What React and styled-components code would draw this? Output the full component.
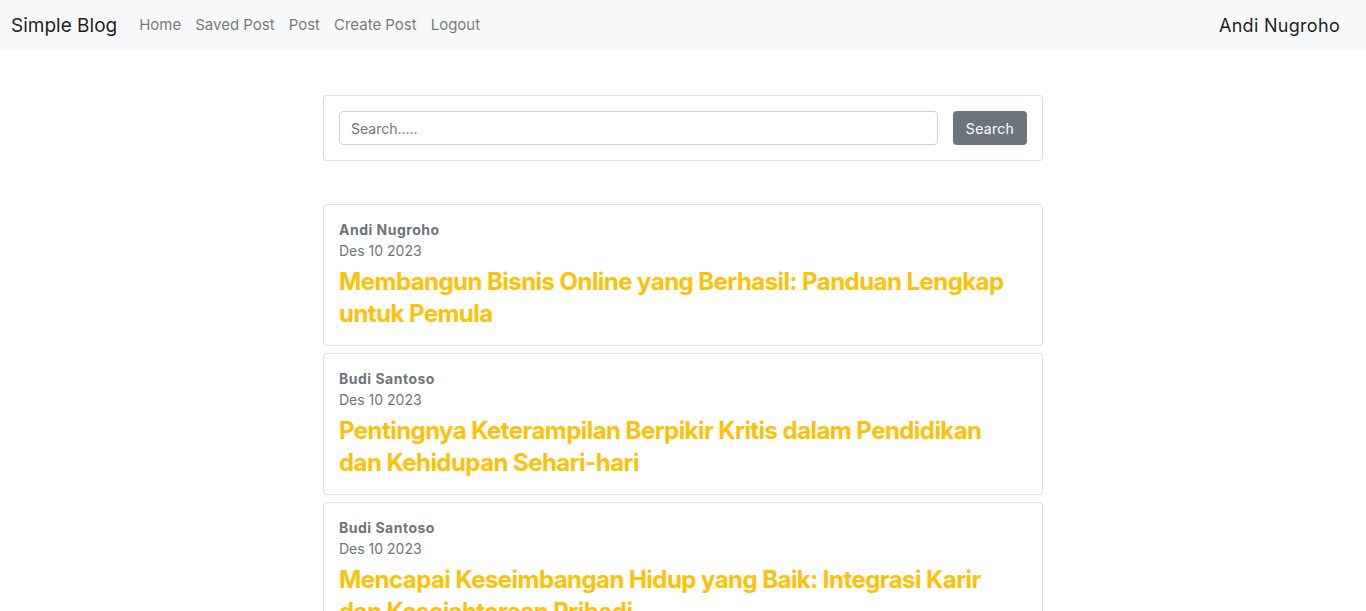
import React from 'react';
import styled, { createGlobalStyle } from 'styled-components';

const GlobalStyle = createGlobalStyle`
  * { box-sizing: border-box; }
  body {
    margin: 0;
    font-family: Inter, "Noto Sans", sans-serif;
    color: #212529;
    background: #fff;
  }
`;

const Navbar = styled.nav`
  height: 50px;
  background: #f8f9fa;
  display: flex;
  align-items: center;
  padding: 0 26px 0 11px;
`;

const Brand = styled.a`
  font-size: 19px;
  color: rgba(0, 0, 0, 0.9);
  margin-right: 22px;
  text-decoration: none;
`;

const NavList = styled.div`
  display: flex;
  gap: 14px;
  flex: 1;
`;

const NavLink = styled.a`
  font-size: 15px;
  color: rgba(0, 0, 0, 0.55);
  text-decoration: none;
  margin-top: -2px;
`;

const UserName = styled.span`
  font-size: 18px;
  letter-spacing: 0.3px;
  color: rgba(0, 0, 0, 0.9);
`;

const Container = styled.main`
  width: 720px;
  margin: 0 auto;
  padding-top: 45px;
`;

const Card = styled.div`
  border: 1px solid rgba(0, 0, 0, 0.125);
  border-radius: 4px;
  padding: 15px;
  background: #fff;
`;

const SearchCard = styled(Card)`
  display: flex;
  gap: 15px;
  margin-bottom: 43px;
`;

const Input = styled.input`
  flex: 1;
  height: 34px;
  border: 1px solid #ced4da;
  border-radius: 4px;
  padding: 0 11px;
  font: inherit;
  font-size: 14px;
  color: #212529;
  &::placeholder { color: #6c757d; }
`;

const Button = styled.button`
  height: 34px;
  width: 74px;
  padding: 0;
  border: none;
  border-radius: 4px;
  background: #6c757d;
  color: #fff;
  font: inherit;
  font-size: 14px;
  letter-spacing: 0.3px;
`;

const PostList = styled.div`
  display: flex;
  flex-direction: column;
  gap: 7px;
`;

const Author = styled.div`
  font-size: 14px;
  font-weight: 700;
  letter-spacing: 0.5px;
  color: #6c757d;
  line-height: 21px;
  margin-top: -1px;
`;

const Date = styled.div`
  font-size: 14px;
  color: #6c757d;
  line-height: 21px;
`;

const Title = styled.h2`
  margin: 5px 0 0;
  font-size: 24px;
  font-weight: 700;
  letter-spacing: -0.55px;
  line-height: 32px;
  color: #ffc107;
`;

const posts = [
  { author: 'Andi Nugroho', date: 'Des 10 2023', title: 'Membangun Bisnis Online yang Berhasil: Panduan Lengkap untuk Pemula' },
  { author: 'Budi Santoso', date: 'Des 10 2023', title: 'Pentingnya Keterampilan Berpikir Kritis dalam Pendidikan dan Kehidupan Sehari-hari' },
  { author: 'Budi Santoso', date: 'Des 10 2023', title: 'Mencapai Keseimbangan Hidup yang Baik: Integrasi Karir dan Kesejahteraan Pribadi' },
];

export default function App() {
  return (
    <>
      <GlobalStyle />
      <Navbar>
        <Brand>Simple Blog</Brand>
        <NavList>
          <NavLink>Home</NavLink>
          <NavLink>Saved Post</NavLink>
          <NavLink>Post</NavLink>
          <NavLink>Create Post</NavLink>
          <NavLink>Logout</NavLink>
        </NavList>
        <UserName>Andi Nugroho</UserName>
      </Navbar>
      <Container>
        <SearchCard>
          <Input placeholder="Search....." />
          <Button>Search</Button>
        </SearchCard>
        <PostList>
          {posts.map((p, i) => (
            <Card key={i}>
              <Author>{p.author}</Author>
              <Date>{p.date}</Date>
              <Title>{p.title}</Title>
            </Card>
          ))}
        </PostList>
      </Container>
    </>
  );
}
